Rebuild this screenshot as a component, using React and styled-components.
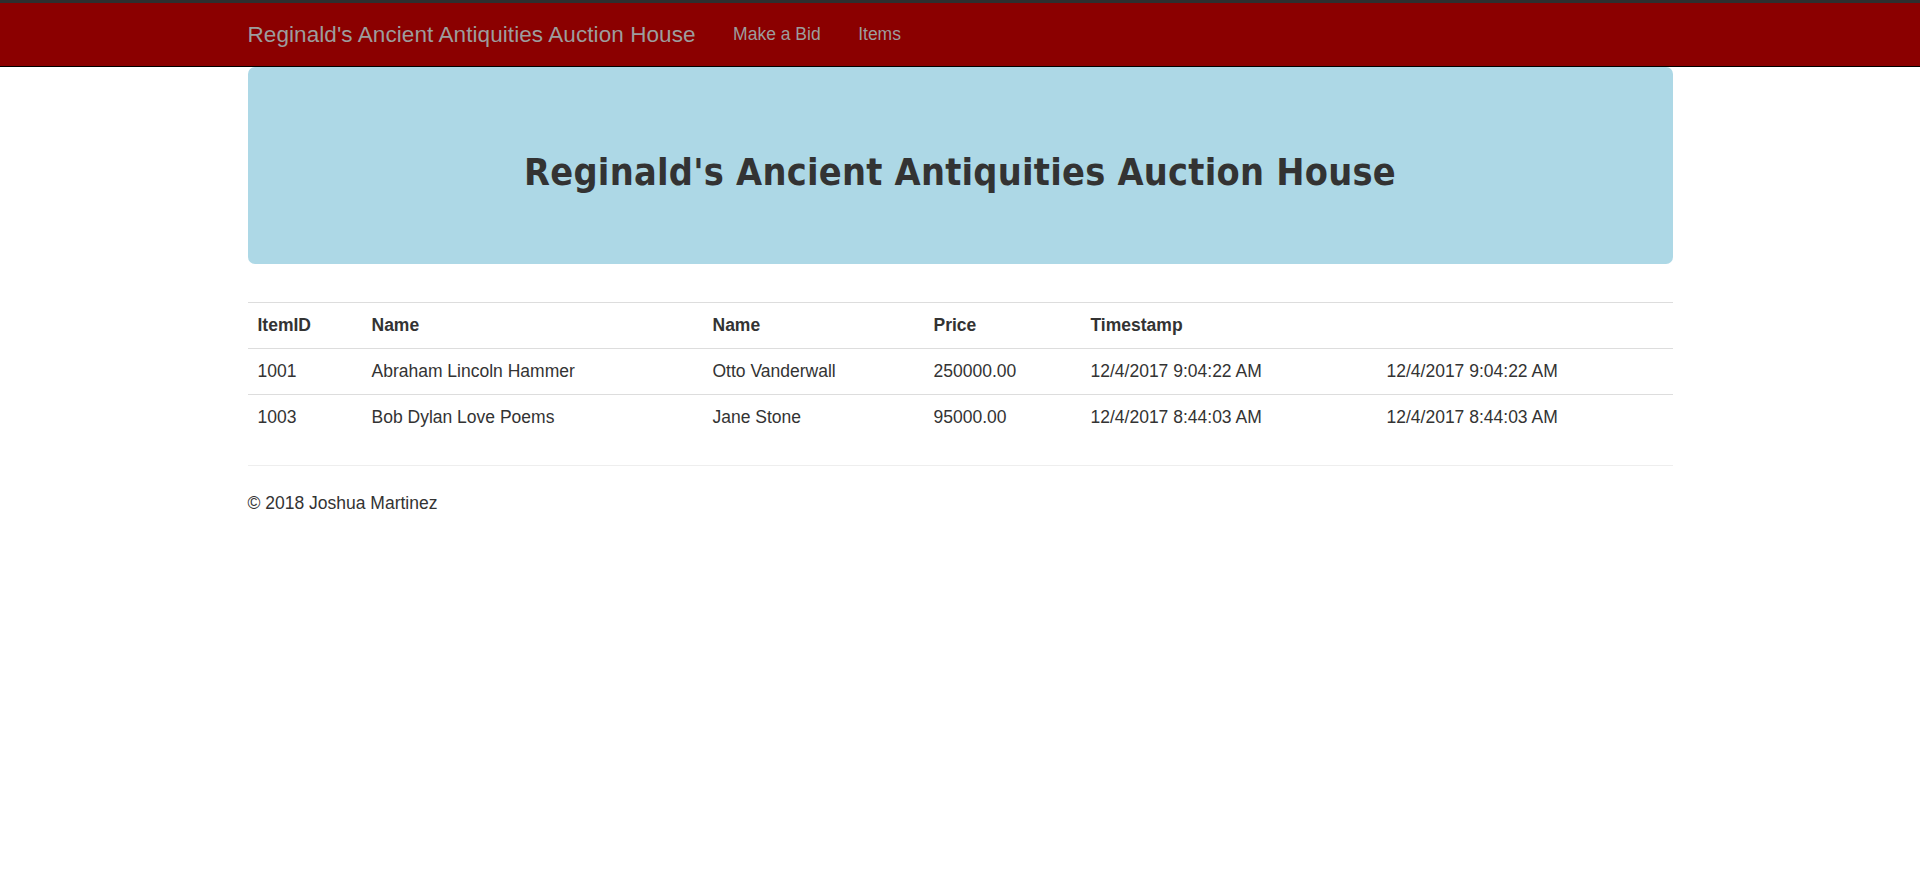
import React from "react";
import styled, { createGlobalStyle } from "styled-components";

const GlobalStyle = createGlobalStyle`
  html, body {
    margin: 0;
    padding: 0;
    background: #ffffff;
  }

  body {
    font-family: "Liberation Sans", Arial, sans-serif;
    font-size: 17.5px;
    line-height: 25px;
    color: #333333;
  }

  * {
    box-sizing: border-box;
  }
`;

const Navbar = styled.nav`
  height: 67px;
  background: #8b0000;
  border-top: 3px solid #2f2f2f;
  border-bottom: 1px solid #000000;
`;

const NavContainer = styled.div`
  display: flex;
  align-items: center;
  width: 1462.5px;
  height: 100%;
  margin: 0 auto;
  padding: 0 18.75px;
`;

const Brand = styled.a`
  margin-left: -18.75px;
  padding: 0 18.75px;
  font-size: 22.5px;
  line-height: 25px;
  letter-spacing: 0.08px;
  color: #9d9d9d;
  text-decoration: none;
`;

const NavLinks = styled.ul`
  display: flex;
  margin: 0;
  padding: 0;
  list-style: none;
`;

const NavLink = styled.a`
  display: block;
  padding: 0 18.75px;
  font-size: 17.5px;
  line-height: 25px;
  color: #9d9d9d;
  text-decoration: none;
`;

const Container = styled.div`
  width: 1462.5px;
  margin: 0 auto;
  padding: 0 18.75px;
`;

const Jumbotron = styled.div`
  margin-bottom: 38.5px;
  padding: 60px 0 58px;
  background: #add8e6;
  border-radius: 7px;
  text-align: center;
`;

const Title = styled.h1`
  margin: 25px 0 12.5px;
  font-family: "DejaVu Sans Condensed", "DejaVu Sans", Verdana, sans-serif;
  font-size: 37.5px;
  font-weight: 700;
  line-height: 1.1;
  letter-spacing: 0.25px;
  color: #333333;
`;

const Table = styled.table`
  width: 100%;
  margin-bottom: 25px;
  border-collapse: collapse;
  border-spacing: 0;
  table-layout: fixed;
`;

const Row = styled.tr`
  border-top: 1.25px solid #dddddd;
`;

const Cell = styled.td`
  width: ${(p) => p.$w}px;
  padding: 10px;
  font-weight: ${(p) => (p.$head ? 700 : 400)};
  text-align: left;
  vertical-align: top;
  line-height: 25px;
`;

const Rule = styled.hr`
  margin: 25px 0;
  border: 0;
  border-top: 1.25px solid #eeeeee;
`;

const Footer = styled.footer`
  p {
    margin: 0 0 12.5px;
  }
`;

const widths = [114, 341, 221, 157, 296, 296];
const header = ["ItemID", "Name", "Name", "Price", "Timestamp", ""];
const bids = [
  ["1001", "Abraham Lincoln Hammer", "Otto Vanderwall", "250000.00", "12/4/2017 9:04:22 AM", "12/4/2017 9:04:22 AM"],
  ["1003", "Bob Dylan Love Poems", "Jane Stone", "95000.00", "12/4/2017 8:44:03 AM", "12/4/2017 8:44:03 AM"],
];

export default function App() {
  return (
    <>
      <GlobalStyle />
      <Navbar>
        <NavContainer>
          <Brand href="#">Reginald's Ancient Antiquities Auction House</Brand>
          <NavLinks>
            <li>
              <NavLink href="#">Make a Bid</NavLink>
            </li>
            <li>
              <NavLink href="#">Items</NavLink>
            </li>
          </NavLinks>
        </NavContainer>
      </Navbar>
      <Container>
        <Jumbotron>
          <Title>Reginald's Ancient Antiquities Auction House</Title>
        </Jumbotron>
        <Table>
          <tbody>
            <Row>
              {header.map((h, i) => (
                <Cell as="th" key={i} $w={widths[i]} $head>
                  {h}
                </Cell>
              ))}
            </Row>
            {bids.map((bid) => (
              <Row key={bid[0]}>
                {bid.map((v, i) => (
                  <Cell key={i} $w={widths[i]}>
                    {v}
                  </Cell>
                ))}
              </Row>
            ))}
          </tbody>
        </Table>
        <Rule />
        <Footer>
          <p>© 2018 Joshua Martinez</p>
        </Footer>
      </Container>
    </>
  );
}
